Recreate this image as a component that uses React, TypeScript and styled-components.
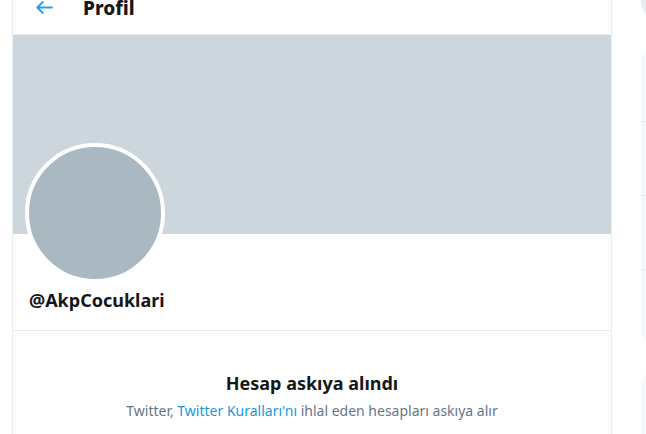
import React from "react";
import styled, { createGlobalStyle } from "styled-components";

const GlobalStyle = createGlobalStyle`
  html, body {
    margin: 0;
    padding: 0;
    background: #ffffff;
    overflow: hidden;
  }
  body {
    font-family: "Noto Sans", "Open Sans", "Liberation Sans", sans-serif;
    color: #14171a;
  }
`;

const ArrowIcon: React.FC = () => (
  <svg width="17" height="13" viewBox="0 0 17 13" fill="none">
    <path
      d="M16 6.5H1.5M6.8 1L1.3 6.5l5.5 5.5"
      stroke="#1da1f2"
      strokeWidth="1.8"
      strokeLinecap="round"
      strokeLinejoin="round"
    />
  </svg>
);

const App: React.FC = () => {
  return (
    <>
      <GlobalStyle />
      <Page>
        <Main>
          <Header>
            <BackButton>
              <ArrowIcon />
            </BackButton>
            <Title>Profil</Title>
          </Header>
          <Banner />
          <ProfileInfo>
            <Avatar />
            <Handle>@AkpCocuklari</Handle>
          </ProfileInfo>
          <Suspended>
            <SuspendedTitle>Hesap askıya alındı</SuspendedTitle>
            <SuspendedText>
              Twitter, <RulesLink>Twitter Kuralları'nı</RulesLink> ihlal eden
              hesapları askıya alır
            </SuspendedText>
          </Suspended>
        </Main>
        <Sidebar>
          <SearchBox />
          <Card $height={296}>
            <CardRow />
            <CardRow />
            <CardRow />
            <CardRow />
          </Card>
          <Card $height={120}>
            <CardRow />
          </Card>
        </Sidebar>
      </Page>
    </>
  );
};

const Page = styled.div`
  display: flex;
  align-items: flex-start;
  gap: 29px;
  padding-left: 12px;
  height: 434px;
  overflow: hidden;
`;

const Main = styled.main`
  flex: 0 0 600px;
  width: 600px;
  min-height: 434px;
  border-left: 1px solid #e6ecf0;
  border-right: 1px solid #e6ecf0;
  box-sizing: border-box;
`;

const Header = styled.div`
  display: flex;
  align-items: flex-start;
  height: 35px;
  padding: 0 0 0 23px;
  border-bottom: 1px solid #e6ecf0;
  box-sizing: border-box;
`;

const BackButton = styled.div`
  display: flex;
  align-items: center;
  height: 15px;
  margin-top: 0px;
  margin-right: 30px;
`;

const Title = styled.h2`
  margin: 0;
  font-size: 19px;
  font-weight: 800;
  line-height: 17px;
  color: #14171a;
`;

const Banner = styled.div`
  height: 199px;
  background: #ccd6dd;
`;

const ProfileInfo = styled.div`
  display: flex;
  flex-direction: column;
  align-items: flex-start;
  padding: 0 12px 18px 12px;
  border-bottom: 1px solid #e6ecf0;
`;

const Avatar = styled.div`
  width: 132px;
  height: 132px;
  margin-top: -91px;
  border-radius: 50%;
  background: #aab8c2;
  border: 4px solid #ffffff;
`;

const Handle = styled.div`
  margin-top: 5px;
  margin-left: 4px;
  font-size: 18px;
  font-weight: 700;
  line-height: 24px;
  color: #14171a;
`;

const Suspended = styled.div`
  display: flex;
  flex-direction: column;
  align-items: center;
  padding-top: 40px;
`;

const SuspendedTitle = styled.div`
  font-size: 18px;
  font-weight: 700;
  line-height: 24px;
  color: #14171a;
`;

const SuspendedText = styled.div`
  margin-top: 6px;
  font-size: 14px;
  line-height: 20px;
  color: #657786;
`;

const RulesLink = styled.span`
  color: #1b95e0;
`;

const Sidebar = styled.aside`
  flex: 0 0 350px;
  display: flex;
  flex-direction: column;
  gap: 20px;
`;

const SearchBox = styled.div`
  height: 21px;
  border-radius: 0 0 20px 20px;
  background: #e6ecf0;
`;

const Card = styled.div<{ $height: number }>`
  height: ${(p) => p.$height}px;
  display: flex;
  flex-direction: column;
  border-radius: 14px;
  background: #f5f8fa;
  overflow: hidden;
  margin-top: 7px;
`;

const CardRow = styled.div`
  flex: 1;
  border-bottom: 1px solid #e6ecf0;
`;

export default App;
